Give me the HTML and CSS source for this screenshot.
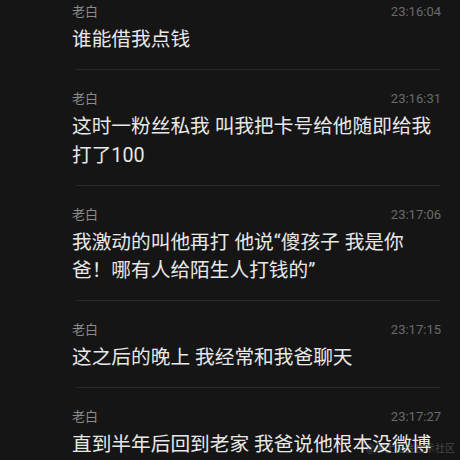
FILE: index.html
```html
<!DOCTYPE html>
<html lang="zh-CN">

<head>
	<meta charset="UTF-8">
	<meta name="viewport" content="width=device-width, initial-scale=1.0">
	<title>老白</title>
	<link rel="stylesheet" href="styles.css">
</head>

<body>
	<div class="chat">
		<div class="entry">
			<div class="entry-head"><span class="name">老白</span><span class="time">23:16:04</span></div>
			<p class="text">谁能借我点钱</p>
		</div>
		<div class="entry">
			<div class="entry-head"><span class="name">老白</span><span class="time">23:16:31</span></div>
			<p class="text">这时一粉丝私我 叫我把卡号给他随即给我打了100</p>
		</div>
		<div class="entry">
			<div class="entry-head"><span class="name">老白</span><span class="time">23:17:06</span></div>
			<p class="text">我激动的叫他再打 他说“傻孩子 我是你爸！哪有人给陌生人打钱的”</p>
		</div>
		<div class="entry">
			<div class="entry-head"><span class="name">老白</span><span class="time">23:17:15</span></div>
			<p class="text">这之后的晚上 我经常和我爸聊天</p>
		</div>
		<div class="entry">
			<div class="entry-head"><span class="name">老白</span><span class="time">23:17:27</span></div>
			<p class="text">直到半年后回到老家 我爸说他根本没微博</p>
		</div>
	</div>

	<div class="watermark">@稀土掘金技术社区</div>
</body>

</html>
```

FILE: styles.css
```css
html,
body {
	height: 100%;
}

body {
	margin: 0;
	background-color: #151515;
	font-family: Roboto, "Noto Sans CJK SC", sans-serif;
	overflow: hidden;
	position: relative;
}

/* the list is scrolled a bit, the first entry starts above the top edge */
.chat {
	margin-top: -17px;
	padding: 0 19px 0 72px;
}

.entry {
	padding-top: 20px;
}

.entry::after {
	content: "";
	display: block;
	height: 1px;
	margin: 14.5px 1px 0 4px;
	background-color: #292929;
}

.entry-head {
	display: flex;
	justify-content: space-between;
	align-items: center;
	height: 18px;
	line-height: 18px;
	font-size: 13px;
}

.name {
	color: #8a8a8a;
}

.time {
	color: #6a6a6a;
}

.text {
	margin: 5px 0 0;
	font-size: 19.7px;
	line-height: 28.5px;
	color: #e8e8e8;
}

.watermark {
	position: absolute;
	right: 5px;
	bottom: 5px;
	font-size: 10px;
	line-height: 12px;
	color: rgba(255, 255, 255, 0.22);
}
```
